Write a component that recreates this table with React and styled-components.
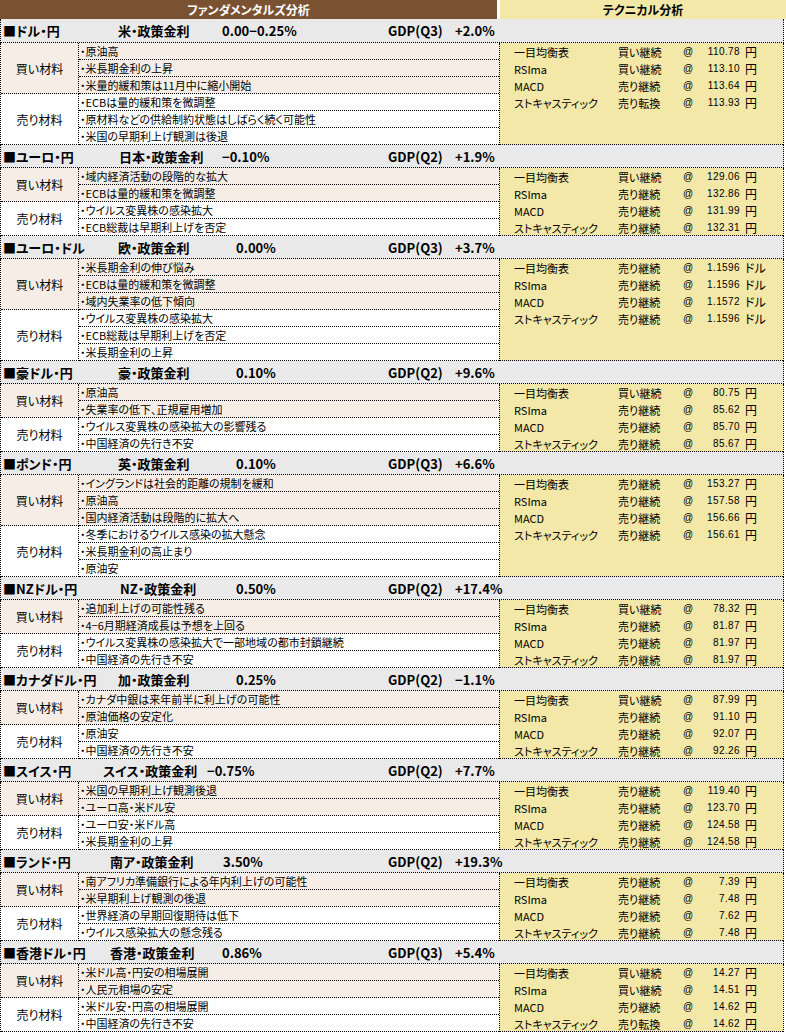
import React from 'react';
import styled, { createGlobalStyle } from 'styled-components';

const GlobalStyle = createGlobalStyle`
  html, body { margin: 0; padding: 0; background: #ffffff; }
  body {
    font-family: "Noto Sans CJK JP", "Noto Sans", sans-serif;
    color: #000;
    font-feature-settings: "palt";
  }
`;

const BROWN = '#7b5231';
const YELLOW = '#f3e8a8';
const GREY = '#e9e9e9';
const BEIGE = '#f6eee6';
const DOT = '1px dotted #000';

const sections = [
  {
    pair: '■ドル・円', policy: '米・政策金利', rate: '0.00−0.25%', policyX: 118, rateX: 222,
    gdp: 'GDP(Q3)', gdpValue: '+2.0%',
    buy: ['・原油高', '・米長期金利の上昇', '・米量的緩和策は11月中に縮小開始'],
    sell: ['・ECBは量的緩和策を微調整', '・原材料などの供給制約状態はしばらく続く可能性', '・米国の早期利上げ観測は後退'],
    unit: '円',
    tech: [['買い継続', '110.78'], ['買い継続', '113.10'], ['売り継続', '113.64'], ['売り転換', '113.93']],
  },
  {
    pair: '■ユーロ・円', policy: '日本・政策金利', rate: '−0.10%', policyX: 119, rateX: 222,
    gdp: 'GDP(Q2)', gdpValue: '+1.9%',
    buy: ['・域内経済活動の段階的な拡大', '・ECBは量的緩和策を微調整'],
    sell: ['・ウイルス変異株の感染拡大', '・ECB総裁は早期利上げを否定'],
    unit: '円',
    tech: [['買い継続', '129.06'], ['売り継続', '132.86'], ['売り継続', '131.99'], ['売り継続', '132.31']],
  },
  {
    pair: '■ユーロ・ドル', policy: '欧・政策金利', rate: '0.00%', policyX: 118, rateX: 236,
    gdp: 'GDP(Q3)', gdpValue: '+3.7%',
    buy: ['・米長期金利の伸び悩み', '・ECBは量的緩和策を微調整', '・域内失業率の低下傾向'],
    sell: ['・ウイルス変異株の感染拡大', '・ECB総裁は早期利上げを否定', '・米長期金利の上昇'],
    unit: 'ドル',
    tech: [['売り継続', '1.1596'], ['売り継続', '1.1596'], ['売り継続', '1.1572'], ['売り継続', '1.1596']],
  },
  {
    pair: '■豪ドル・円', policy: '豪・政策金利', rate: '0.10%', policyX: 118, rateX: 236,
    gdp: 'GDP(Q2)', gdpValue: '+9.6%',
    buy: ['・原油高', '・失業率の低下、正規雇用増加'],
    sell: ['・ウイルス変異株の感染拡大の影響残る', '・中国経済の先行き不安'],
    unit: '円',
    tech: [['買い継続', '80.75'], ['売り継続', '85.62'], ['売り継続', '85.70'], ['売り継続', '85.67']],
  },
  {
    pair: '■ポンド・円', policy: '英・政策金利', rate: '0.10%', policyX: 118, rateX: 236,
    gdp: 'GDP(Q3)', gdpValue: '+6.6%',
    buy: ['・イングランドは社会的距離の規制を緩和', '・原油高', '・国内経済活動は段階的に拡大へ'],
    sell: ['・冬季におけるウイルス感染の拡大懸念', '・米長期金利の高止まり', '・原油安'],
    unit: '円',
    tech: [['売り継続', '153.27'], ['売り継続', '157.58'], ['売り継続', '156.66'], ['売り継続', '156.61']],
  },
  {
    pair: '■NZドル・円', policy: 'NZ・政策金利', rate: '0.50%', policyX: 120, rateX: 236,
    gdp: 'GDP(Q2)', gdpValue: '+17.4%',
    buy: ['・追加利上げの可能性残る', '・4−6月期経済成長は予想を上回る'],
    sell: ['・ウイルス変異株の感染拡大で一部地域の都市封鎖継続', '・中国経済の先行き不安'],
    unit: '円',
    tech: [['買い継続', '78.32'], ['売り継続', '81.87'], ['売り継続', '81.97'], ['売り継続', '81.97']],
  },
  {
    pair: '■カナダドル・円', policy: '加・政策金利', rate: '0.25%', policyX: 118, rateX: 236,
    gdp: 'GDP(Q2)', gdpValue: '−1.1%',
    buy: ['・カナダ中銀は来年前半に利上げの可能性', '・原油価格の安定化'],
    sell: ['・原油安', '・中国経済の先行き不安'],
    unit: '円',
    tech: [['買い継続', '87.99'], ['売り継続', '91.10'], ['売り継続', '92.07'], ['売り継続', '92.26']],
  },
  {
    pair: '■スイス・円', policy: 'スイス・政策金利', rate: '−0.75%', policyX: 103, rateX: 207,
    gdp: 'GDP(Q2)', gdpValue: '+7.7%',
    buy: ['・米国の早期利上げ観測後退', '・ユーロ高・米ドル安'],
    sell: ['・ユーロ安・米ドル高', '・米長期金利の上昇'],
    unit: '円',
    tech: [['売り継続', '119.40'], ['売り継続', '123.70'], ['売り継続', '124.58'], ['売り継続', '124.58']],
  },
  {
    pair: '■ランド・円', policy: '南ア・政策金利', rate: '3.50%', policyX: 110, rateX: 223,
    gdp: 'GDP(Q2)', gdpValue: '+19.3%',
    buy: ['・南アフリカ準備銀行による年内利上げの可能性', '・米早期利上げ観測の後退'],
    sell: ['・世界経済の早期回復期待は低下', '・ウイルス感染拡大の懸念残る'],
    unit: '円',
    tech: [['売り継続', '7.39'], ['売り継続', '7.48'], ['売り継続', '7.62'], ['売り継続', '7.48']],
  },
  {
    pair: '■香港ドル・円', policy: '香港・政策金利', rate: '0.86%', policyX: 110, rateX: 222,
    gdp: 'GDP(Q3)', gdpValue: '+5.4%',
    buy: ['・米ドル高・円安の相場展開', '・人民元相場の安定'],
    sell: ['・米ドル安・円高の相場展開', '・中国経済の先行き不安'],
    unit: '円',
    tech: [['買い継続', '14.27'], ['買い継続', '14.51'], ['売り継続', '14.62'], ['売り転換', '14.62']],
  },
];

const indicators = ['一目均衡表', 'RSIma', 'MACD', 'ストキャスティック'];

const Sheet = styled.div`
  width: 786px;
`;

const TitleBar = styled.div`
  display: flex;
  height: 19px;
`;

const FundTitle = styled.div`
  width: 497px;
  margin-right: 3px;
  background: ${BROWN};
  color: #ffffff;
  font-size: 12px;
  font-weight: 700;
  display: flex;
  align-items: center;
  justify-content: center;
`;

const TechTitle = styled.div`
  flex: 1;
  background: ${YELLOW};
  font-size: 12px;
  font-weight: 700;
  display: flex;
  align-items: center;
  justify-content: center;
`;

const HeaderRow = styled.div`
  display: flex;
  align-items: center;
  box-sizing: border-box;
  width: 784px;
  height: ${(p) => (p.$first ? 24 : 23)}px;
  background: ${GREY};
  border-left: ${DOT};
  border-right: ${DOT};
  border-bottom: ${DOT};
  font-size: 13px;
  font-weight: 700;
  white-space: nowrap;
`;

const PairName = styled.div`
  width: 102px;
  padding-left: 2px;
  box-sizing: border-box;
`;

const PolicyName = styled.div`
  box-sizing: border-box;
  width: ${(p) => p.$rateX - 103}px;
  padding-left: ${(p) => p.$policyX - 103}px;
`;

const RateValue = styled.div`
  width: ${(p) => 388 - p.$rateX}px;
`;

const GdpLabel = styled.div`
  width: 67px;
`;

const GdpValue = styled.div``;

const Body = styled.div`
  display: grid;
  grid-template-columns: 78px 420px 284px;
  grid-template-rows: repeat(${(p) => p.$rows}, 17px);
  box-sizing: border-box;
  width: 784px;
  border-left: ${DOT};
  border-right: ${DOT};
`;

const Label = styled.div`
  grid-column: 1;
  grid-row: ${(p) => p.$start} / span ${(p) => p.$span};
  background: ${(p) => (p.$buy ? BEIGE : '#ffffff')};
  border-right: ${DOT};
  border-bottom: ${DOT};
  display: flex;
  align-items: center;
  justify-content: center;
  font-size: 12px;
`;

const Item = styled.div`
  grid-column: 2;
  box-sizing: border-box;
  background: ${(p) => (p.$buy ? BEIGE : '#ffffff')};
  border-bottom: ${DOT};
  padding-left: 1px;
  font-size: 11px;
  line-height: 16px;
  white-space: nowrap;
  overflow: hidden;
`;

const TechPanel = styled.div`
  grid-column: 3;
  grid-row: 1 / -1;
  background: ${YELLOW};
  border-left: ${DOT};
  border-bottom: ${DOT};
  display: grid;
  grid-template-rows: repeat(4, 17px);
  align-content: start;
`;

const TechRow = styled.div`
  display: grid;
  grid-template-columns: 104px 65px 20px 37px auto;
  align-items: center;
  padding-left: 14px;
  font-size: 11px;
  white-space: nowrap;
`;

const Indicator = styled.span``;
const Signal = styled.span``;
const At = styled.span`
  font-family: "Liberation Sans", sans-serif;
  font-size: 10px;
`;
const Price = styled.span`
  text-align: right;
  font-family: "Liberation Sans", sans-serif;
  font-size: 10px;
  letter-spacing: 0.4px;
`;
const Unit = styled.span`
  padding-left: 5px;
  font-size: 12px;
`;

function Section({ data, first }) {
  const rows = data.buy.length + data.sell.length;
  return (
    <>
      <HeaderRow $first={first}>
        <PairName>{data.pair}</PairName>
        <PolicyName $policyX={data.policyX} $rateX={data.rateX}>{data.policy}</PolicyName>
        <RateValue $rateX={data.rateX}>{data.rate}</RateValue>
        <GdpLabel>{data.gdp}</GdpLabel>
        <GdpValue>{data.gdpValue}</GdpValue>
      </HeaderRow>
      <Body $rows={rows}>
        <Label $buy $start={1} $span={data.buy.length}>買い材料</Label>
        <Label $start={data.buy.length + 1} $span={data.sell.length}>売り材料</Label>
        {data.buy.map((t, i) => (
          <Item key={'b' + i} $buy>{t}</Item>
        ))}
        {data.sell.map((t, i) => (
          <Item key={'s' + i}>{t}</Item>
        ))}
        <TechPanel>
          {data.tech.map(([sig, price], i) => (
            <TechRow key={i}>
              <Indicator>{indicators[i]}</Indicator>
              <Signal>{sig}</Signal>
              <At>@</At>
              <Price>{price}</Price>
              <Unit>{data.unit}</Unit>
            </TechRow>
          ))}
        </TechPanel>
      </Body>
    </>
  );
}

export default function App() {
  return (
    <Sheet>
      <GlobalStyle />
      <TitleBar>
        <FundTitle>ファンダメンタルズ分析</FundTitle>
        <TechTitle>テクニカル分析</TechTitle>
      </TitleBar>
      {sections.map((s, i) => (
        <Section key={i} data={s} first={i === 0} />
      ))}
    </Sheet>
  );
}
